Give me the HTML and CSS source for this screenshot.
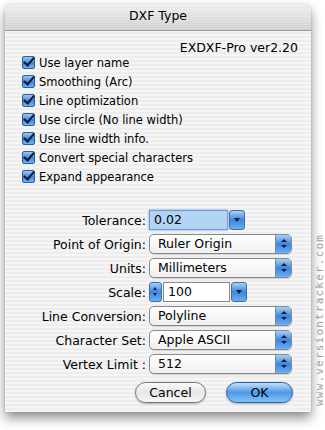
FILE: index.html
```html
<!DOCTYPE html>
<html lang="en">
<head>
  <meta charset="UTF-8">
  <title>DXF Type</title>
  <link rel="stylesheet" href="styles.css">
</head>
<body>
  <div class="window">
    <div class="titlebar">DXF Type</div>
    <div class="content">
      <div class="version">EXDXF-Pro ver2.20</div>

      <ul class="checks">
        <li><span class="cb"></span>Use layer name</li>
        <li><span class="cb"></span>Smoothing (Arc)</li>
        <li><span class="cb"></span>Line optimization</li>
        <li><span class="cb"></span>Use circle (No line width)</li>
        <li><span class="cb"></span>Use line width info.</li>
        <li><span class="cb"></span>Convert special characters</li>
        <li><span class="cb"></span>Expand appearance</li>
      </ul>

      <div class="form">
        <label>Tolerance:</label>
        <div class="combo">
          <div class="field selected">0.02</div>
          <span class="drop"></span>
        </div>

        <label>Point of Origin:</label>
        <div class="popup">Ruler Origin<span class="cap"></span></div>

        <label>Units:</label>
        <div class="popup">Millimeters<span class="cap"></span></div>

        <label>Scale:</label>
        <div class="combo">
          <span class="stepper"></span>
          <div class="field short">100</div>
          <span class="drop"></span>
        </div>

        <label>Line Conversion:</label>
        <div class="popup">Polyline<span class="cap"></span></div>

        <label>Character Set:</label>
        <div class="popup">Apple ASCII<span class="cap"></span></div>

        <label>Vertex Limit :</label>
        <div class="popup">512<span class="cap"></span></div>
      </div>

      <div class="buttons">
        <button class="btn">Cancel</button>
        <button class="btn default">OK</button>
      </div>
    </div>
  </div>
  <div class="watermark">www.versiontracker.com</div>
</body>
</html>
```

FILE: styles.css
```css
body {
  margin: 0;
  background: #fff;
  font-family: "Lucida Grande", "DejaVu Sans", sans-serif;
  font-size: 12px;
  color: #000;
  width: 325px;
  height: 430px;
  overflow: hidden;
  position: relative;
}
.window {
  margin: 4px 0 0 5px;
  width: 306px;
  height: 408px;
  border-radius: 6px 6px 0 0;
  background: repeating-linear-gradient(#ededed 0, #ededed 2px, #f5f5f5 2px, #f5f5f5 4px);
  box-shadow: 0 6px 12px rgba(0,0,0,0.45), 0 0 1px rgba(0,0,0,0.5);
  display: flex;
  flex-direction: column;
}
.titlebar {
  height: 26px;
  line-height: 24px;
  text-align: center;
  font-size: 12.5px;
  border-radius: 6px 6px 0 0;
  border-bottom: 1px solid #9a9a9a;
  background:
    repeating-linear-gradient(rgba(255,255,255,0.25) 0, rgba(255,255,255,0.25) 1px, transparent 1px, transparent 2px),
    linear-gradient(#ececec, #cfcfcf);
}
.content {
  flex: 1;
  padding: 6px 13px 0 16px;
  display: flex;
  flex-direction: column;
}
.version {
  text-align: right;
  font-size: 12.5px;
  height: 19px;
  line-height: 19px;
  margin-top: 1px;
}
.checks {
  list-style: none;
  margin: -4px 0 0;
  padding: 0;
  font-size: 11.5px;
}
.checks li {
  height: 19px;
  display: flex;
  align-items: center;
  gap: 4px;
}
.cb {
  width: 13px;
  height: 13px;
  margin-left: 1px;
  border-radius: 2px;
  border: 1px solid #2e5f9a;
  box-sizing: border-box;
  background: linear-gradient(#9cc8f2, #3f86d8 55%, #6fb3f0);
  position: relative;
}
.cb::after {
  content: "";
  position: absolute;
  left: 3px;
  top: -2px;
  width: 4px;
  height: 9px;
  border: solid #0c1a33;
  border-width: 0 2.5px 2.5px 0;
  transform: rotate(40deg);
}
.form {
  margin-top: 24px;
  display: grid;
  grid-template-columns: 125px auto;
  column-gap: 3px;
  row-gap: 4px;
  align-items: center;
}
.form label {
  text-align: right;
  font-size: 12.5px;
  white-space: nowrap;
}
.popup {
  width: 143px;
  height: 20px;
  box-sizing: border-box;
  border: 1px solid #8a8a8a;
  border-radius: 5px;
  background: linear-gradient(#fff, #f0f0f0);
  padding-left: 8px;
  line-height: 18px;
  font-size: 12.5px;
  position: relative;
  overflow: hidden;
  box-shadow: 0 1px 1px rgba(0,0,0,0.15);
}
.cap {
  position: absolute;
  right: 0;
  top: 0;
  width: 15px;
  height: 18px;
  border-left: 1px solid #6d8fbf;
  background: linear-gradient(#a8d0f6, #3d86dc 50%, #6ab0f2);
}
.cap::before, .cap::after {
  content: "";
  position: absolute;
  left: 5px;
  border-left: 3px solid transparent;
  border-right: 3px solid transparent;
}
.cap::before {
  top: 4px;
  border-bottom: 3px solid #102040;
}
.cap::after {
  top: 10px;
  border-top: 3px solid #102040;
}
.combo {
  display: flex;
  align-items: center;
  gap: 1px;
  height: 20px;
}
.field {
  width: 80px;
  height: 20px;
  box-sizing: border-box;
  border: 1px solid #8a8a8a;
  background: #fff;
  padding-left: 4px;
  line-height: 18px;
  font-size: 12.5px;
}
.field.selected {
  width: 79px;
  background: #b3d3f5;
  border-color: #6f9ad3;
  box-shadow: 0 0 2px #5f97e0;
}
.field.short {
  width: 67px;
}
.drop {
  width: 14px;
  height: 18px;
  border: 1px solid #3f6fa8;
  border-radius: 3px;
  background: linear-gradient(#a8d0f6, #3d86dc 50%, #6ab0f2);
  position: relative;
}
.drop::after {
  content: "";
  position: absolute;
  left: 4px;
  top: 7px;
  border-left: 3px solid transparent;
  border-right: 3px solid transparent;
  border-top: 4px solid #102040;
}
.stepper {
  width: 11px;
  height: 18px;
  border: 1px solid #3f6fa8;
  border-radius: 3px;
  background: linear-gradient(#a8d0f6, #3d86dc 50%, #6ab0f2);
  position: relative;
}
.stepper::before, .stepper::after {
  content: "";
  position: absolute;
  left: 3px;
  border-left: 2.5px solid transparent;
  border-right: 2.5px solid transparent;
}
.stepper::before {
  top: 4px;
  border-bottom: 3px solid #102040;
}
.stepper::after {
  top: 10px;
  border-top: 3px solid #102040;
}
.buttons {
  display: flex;
  justify-content: flex-end;
  gap: 20px;
  margin-top: 8px;
  padding-right: 5px;
}
.btn {
  height: 21px;
  width: 71px;
  border-radius: 11px;
  border: 1px solid #777;
  background: linear-gradient(#fafafa, #e6e6e6 50%, #f8f8f8);
  font-family: inherit;
  font-size: 12.5px;
  padding: 0;
  box-shadow: 0 1px 2px rgba(0,0,0,0.3);
}
.btn.default {
  width: 67px;
  border-color: #2a5d9e;
  background: linear-gradient(#bfe0fb, #4f99e6 50%, #7fc3fa);
}
.watermark {
  position: absolute;
  left: 313px;
  top: 406px;
  transform-origin: 0 0;
  transform: rotate(-90deg);
  font-family: "DejaVu Sans Mono", monospace;
  font-size: 11px;
  color: #a0a0a0;
  letter-spacing: 1.2px;
  white-space: nowrap;
}
```
